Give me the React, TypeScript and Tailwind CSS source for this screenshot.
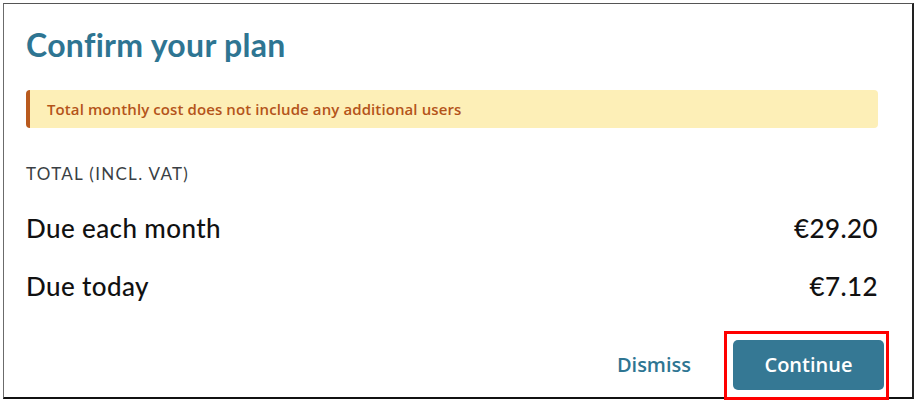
import React from "react";

export default function App() {
  return (
    <div className="w-[917px] h-[405px] bg-white p-[3px]">
      <div className="relative w-[911px] h-[396px] bg-white border-l border-t border-l-[#6b6b6b] border-t-[#555] border-r-2 border-b-2 border-r-[#222] border-b-[#111] pl-[22px] pr-[34px] pt-[22px]">
        <h1 className="text-[32px] leading-[38px] tracking-[0.3px] font-bold text-[#2e7592] [font-family:Lato,sans-serif]">
          Confirm your plan
        </h1>
        <div className="mt-[26px] h-[38px] flex items-center rounded-[4px] bg-[#fdefb7] border-l-4 border-l-[#b95a1e] pl-[17px]">
          <span className="text-[15px] tracking-[0.1px] font-semibold text-[#b4541a] [font-family:'Open_Sans',sans-serif]">
            Total monthly cost does not include any additional users
          </span>
        </div>
        <div className="mt-[35px] text-[17px] tracking-[1.3px] text-[#3a3f44] leading-[22px] [font-family:Lato,sans-serif]">
          TOTAL (INCL. VAT)
        </div>
        <div className="mt-[27px] flex justify-between items-center text-[26px] leading-[32px] tracking-[0.4px] font-medium text-[#111] [font-family:Lato,sans-serif]">
          <span>Due each month</span>
          <span>€29.20</span>
        </div>
        <div className="mt-[26px] flex justify-between items-center text-[26px] leading-[32px] tracking-[0.4px] font-medium text-[#111] [font-family:Lato,sans-serif]">
          <span>Due today</span>
          <span>€7.12</span>
        </div>
        <div className="mt-[38px] flex justify-end items-center -mr-[6px]">
          <button className="text-[20px] font-semibold text-[#2e7592] [font-family:'Open_Sans',sans-serif] mr-[42px]">
            Dismiss
          </button>
          <div className="relative">
            <button className="w-[151px] h-[50px] rounded-[5px] bg-[#357894] text-white text-[20px] font-semibold [font-family:'Open_Sans',sans-serif]">
              Continue
            </button>
            <div className="absolute -left-[9px] -top-[9px] w-[165px] h-[69px] border-[3px] border-[#ff0000] pointer-events-none" />
          </div>
        </div>
      </div>
    </div>
  );
}
